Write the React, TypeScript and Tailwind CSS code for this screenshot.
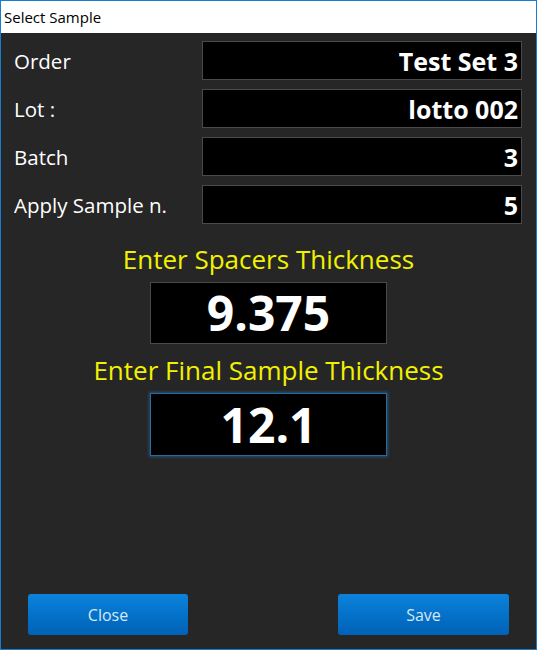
import React from "react";

const fields = [
  { label: "Order", value: "Test Set 3" },
  { label: "Lot :", value: "lotto 002" },
  { label: "Batch", value: "3" },
  { label: "Apply Sample n.", value: "5" },
];

const App: React.FC = () => {
  return (
    <div
      className="w-[537px] h-[650px] border border-[#1a7ccf] flex flex-col bg-[#262626]"
      style={{ fontFamily: '"Open Sans", "Noto Sans", sans-serif' }}
    >
      {/* Title bar */}
      <div className="h-[32px] bg-white flex items-center px-[3px] text-[15px] text-black shrink-0">
        Select Sample
      </div>

      {/* Body */}
      <div className="flex-1 flex flex-col">
        <div className="flex flex-col gap-[9px] pt-[8px] pl-[13px] pr-[14px]">
          {fields.map((f) => (
            <div key={f.label} className="flex items-center h-[39px]">
              <span className="flex-1 text-white text-[20.5px] leading-[28px]">{f.label}</span>
              <div className="w-[320px] h-[39px] bg-black border border-[#4a4a4a] flex items-center justify-end pr-[3px] text-white font-bold text-[25px] leading-[32px]">
                {f.value}
              </div>
            </div>
          ))}
        </div>

        {/* Thickness */}
        <div className="flex flex-col items-center mt-[19px]">
          <div className="text-[#f2f200] text-[26px] leading-[32px]">Enter Spacers Thickness</div>
          <div className="mt-[7px] w-[237px] h-[62px] bg-black border border-[#4a4a4a] flex items-center justify-center text-white font-bold text-[48px] leading-[56px]">
            9.375
          </div>
          <div className="mt-[10px] text-[#f2f200] text-[26px] leading-[32px]">Enter Final Sample Thickness</div>
          <div className="mt-[7px] w-[237px] h-[63px] bg-black border border-[#2c6a99] shadow-[0_0_3px_1px_rgba(30,110,170,0.6)] flex items-center justify-center text-white font-bold text-[48px] leading-[56px]">
            12.1
          </div>
        </div>

        {/* Buttons */}
        <div className="mt-auto flex justify-between pl-[27px] pr-[27px] pb-[14px]">
          <button className="w-[160px] h-[41px] rounded-[3px] bg-gradient-to-b from-[#0c82dc] to-[#0062b6] text-[#d6e8f7] text-[16px]">
            Close
          </button>
          <button className="w-[171px] h-[41px] rounded-[3px] bg-gradient-to-b from-[#0c82dc] to-[#0062b6] text-[#d6e8f7] text-[16px]">
            Save
          </button>
        </div>
      </div>
    </div>
  );
};

export default App;
